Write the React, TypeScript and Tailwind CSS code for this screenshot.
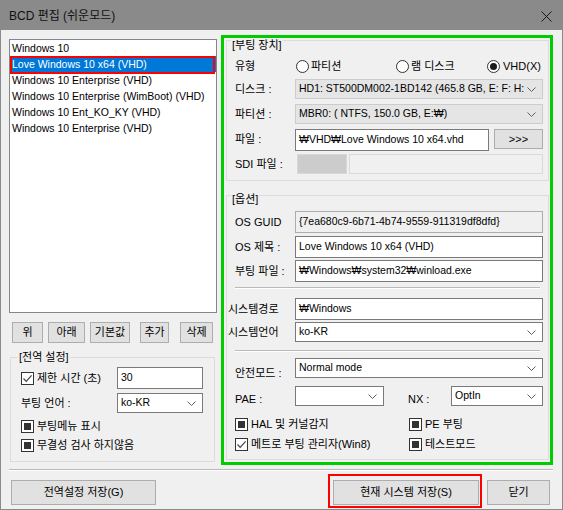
import type { ReactNode } from "react";
import { clsx as cn } from "clsx";

const ENTRIES = [
  "Windows 10",
  "Love Windows 10 x64 (VHD)",
  "Windows 10 Enterprise (VHD)",
  "Windows 10 Enterprise (WimBoot) (VHD)",
  "Windows 10 Ent_KO_KY (VHD)",
  "Windows 10 Enterprise (VHD)",
];

function Chevron() {
  return (
    <svg width="9" height="5" viewBox="0 0 9 5" className="shrink-0">
      <path d="M0.5 0.5 L4.5 4.5 L8.5 0.5" fill="none" stroke="#606060" strokeWidth="1" />
    </svg>
  );
}

function Combo({ value, disabled, className }: { value?: string; disabled?: boolean; className?: string }) {
  return (
    <div
      className={cn(
        "flex items-center justify-between h-[20px] border pl-[3px] pr-[6px] gap-[3px]",
        disabled ? "bg-[#e5e5e5] border-[#cccccc]" : "bg-white border-[#7a7a7a]",
        className
      )}
    >
      <span className="overflow-hidden whitespace-nowrap text-[10.5px]">{value}</span>
      <Chevron />
    </div>
  );
}

function TextBox({ value, readOnly, className }: { value?: string; readOnly?: boolean; className?: string }) {
  return (
    <div
      className={cn(
        "flex items-center h-[22px] border pl-[3px] whitespace-nowrap overflow-hidden text-[10.5px]",
        readOnly ? "bg-[#f0f0f0] border-[#adadad]" : "bg-white border-[#7a7a7a]",
        className
      )}
    >
      {value}
    </div>
  );
}

function Btn({ children, className }: { children: ReactNode; className?: string }) {
  return (
    <div
      className={cn(
        "flex items-center justify-center bg-[#e1e1e1] border border-[#adadad] whitespace-nowrap",
        className
      )}
    >
      {children}
    </div>
  );
}

function Check({ state, label, className }: { state: "checked" | "mixed"; label: string; className?: string }) {
  return (
    <div className={cn("flex items-center gap-[3px] h-[14px] whitespace-nowrap", className)}>
      <span className="w-[13px] h-[13px] border border-[#333333] bg-white flex items-center justify-center shrink-0">
        {state === "mixed" ? (
          <span className="w-[7px] h-[7px] bg-[#333333]" />
        ) : (
          <svg width="11" height="11" viewBox="0 0 11 11">
            <path d="M1.5 5.5 L4.2 8.3 L9.6 2.4" fill="none" stroke="#444444" strokeWidth="1.2" />
          </svg>
        )}
      </span>
      <span>{label}</span>
    </div>
  );
}

function Radio({ checked, label, className }: { checked?: boolean; label: string; className?: string }) {
  return (
    <div className={cn("flex items-center gap-[2px] whitespace-nowrap", className)}>
      <span className="w-[13px] h-[13px] rounded-full border border-[#333333] bg-white flex items-center justify-center shrink-0">
        {checked && <span className="w-[7px] h-[7px] rounded-full bg-[#1a1a1a]" />}
      </span>
      <span>{label}</span>
    </div>
  );
}

function Row({
  label,
  labelClass,
  className,
  children,
}: {
  label: string;
  labelClass?: string;
  className?: string;
  children: ReactNode;
}) {
  return (
    <div className={cn("flex items-center", className)}>
      <div className={cn("w-[60px] shrink-0 whitespace-nowrap", labelClass)}>{label}</div>
      <div className="w-[248px]">{children}</div>
    </div>
  );
}

function Separator({ className }: { className?: string }) {
  return (
    <div className={className}>
      <div className="h-[1px] bg-[#b9b9b9]" />
      <div className="h-[1px] bg-white" />
    </div>
  );
}

export default function App() {
  return (
    <div className="w-[563px] h-[510px] overflow-hidden bg-[#f0f0f0] border-x border-b border-[#8a8a8a] flex flex-col text-[11px] text-black font-['Liberation_Sans','Noto_Sans_CJK_KR',sans-serif]">
      {/* title bar */}
      <div className="h-[30px] shrink-0 bg-[#8a8a8a] flex items-center justify-between pl-[8px] pr-[10px] pt-[2px]">
        <span className="text-[12px] text-[#111111]">BCD 편집 (쉬운모드)</span>
        <svg width="11" height="11" viewBox="0 0 11 11">
          <path d="M0.5 0.5 L10.5 10.5 M10.5 0.5 L0.5 10.5" stroke="#1a1a1a" strokeWidth="1" />
        </svg>
      </div>

      <div className="flex items-start pl-[8px] pt-[5px]">
        {/* left column */}
        <div className="w-[208px] mt-[4px] flex flex-col">
          <div className="h-[274px] border border-[#828790] bg-white text-[10.5px]">
            {ENTRIES.map((entry, i) =>
              i === 1 ? (
                <div key={i} className="relative h-[16px] leading-[16px] pl-[2px] bg-[#0078d7] text-white whitespace-nowrap">
                  {entry}
                  <div className="absolute left-0 right-[1px] top-0 h-[18px] border-2 border-[#ff0000]" />
                </div>
              ) : (
                <div key={i} className="h-[16px] leading-[16px] pl-[2px] whitespace-nowrap">
                  {entry}
                </div>
              )
            )}
          </div>

          <div className="flex mt-[9px] h-[21px]">
            <Btn className="ml-[3px] w-[31px]">위</Btn>
            <Btn className="ml-[5px] w-[37px]">아래</Btn>
            <Btn className="ml-[5px] w-[40px]">기본값</Btn>
            <Btn className="ml-[10px] w-[29px]">추가</Btn>
            <Btn className="ml-[11px] w-[33px]">삭제</Btn>
          </div>

          <div className="ml-[1px] w-[205px] mt-[14px] border border-[#dcdcdc] pl-[10px] pb-[9px] flex flex-col">
            <div className="w-fit -mt-[8px] -ml-[3px] h-[14px] leading-[14px] px-[1px] bg-[#f0f0f0]">[전역 설정]</div>
            <div className="flex items-center mt-[3px]">
              <Check state="checked" label="제한 시간 (초)" className="w-[96px]" />
              <TextBox value="30" className="w-[86px]" />
            </div>
            <div className="flex items-center mt-[4px]">
              <div className="w-[96px]">부팅 언어 :</div>
              <Combo value="ko-KR" className="w-[86px]" />
            </div>
            <Check state="mixed" label="부팅메뉴 표시" className="mt-[6px]" />
            <Check state="mixed" label="무결성 검사 하지않음" className="mt-[5px]" />
          </div>
        </div>

        {/* right green frame */}
        <div className="ml-[4px] w-[332px] border-[3px] border-[#00cc00] flex flex-col">
          {/* boot device group */}
          <div className="mt-[2px] ml-[2px] mr-[1px] border border-[#dcdcdc] pl-[8px] pb-[6px] flex flex-col">
            <div className="w-fit -mt-[3px] -ml-[4px] h-[14px] leading-[14px] px-[1px] bg-[#f0f0f0]">[부팅 장치]</div>
            <div className="flex items-center mt-[6px] h-[17px]">
              <div className="w-[60px]">유형</div>
              <Radio label="파티션" className="ml-[1px] w-[100px]" />
              <Radio label="램 디스크" className="w-[91px]" />
              <Radio checked label="VHD(X)" className="gap-[3px]" />
            </div>
            <Row label="디스크 :" className="mt-[4px]">
              <Combo disabled value="HD1: ST500DM002-1BD142 (465.8 GB, E: F: H:" />
            </Row>
            <Row label="파티션 :" className="mt-[5px]">
              <Combo disabled value="MBR0: ( NTFS, 150.0 GB, E:₩)" />
            </Row>
            <Row label="파일 :" className="mt-[5px]">
              <div className="flex h-[20px]">
                <TextBox value="₩VHD₩Love Windows 10 x64.vhd" className="w-[194px] h-[20px]" />
                <Btn className="ml-[5px] w-[49px] h-[20px]">&gt;&gt;&gt;</Btn>
              </div>
            </Row>
            <Row label="SDI 파일 :" className="mt-[5px]">
              <div className="flex h-[20px]">
                <div className="ml-[2px] w-[50px] bg-[#cccccc] border border-[#d8d8d8]" />
                <div className="ml-[2px] flex-1 bg-[#f0f0f0] border border-[#d9d9d9]" />
              </div>
            </Row>
          </div>

          {/* options group */}
          <div className="mt-[14px] ml-[2px] mr-[1px] mb-[2px] border border-[#dcdcdc] pl-[8px] pb-[8px] flex flex-col">
            <div className="w-fit -mt-[4px] -ml-[4px] h-[14px] leading-[14px] px-[1px] bg-[#f0f0f0]">[옵션]</div>
            <Row label="OS GUID" className="mt-[5px]">
              <TextBox readOnly value="{7ea680c9-6b71-4b74-9559-911319df8dfd}" />
            </Row>
            <Row label="OS 제목 :" className="mt-[3px]">
              <TextBox value="Love Windows 10 x64 (VHD)" />
            </Row>
            <Row label="부팅 파일 :" className="mt-[2px]">
              <TextBox value="₩Windows₩system32₩winload.exe" />
            </Row>
            <Separator className="mt-[5px] mr-[8px]" />
            <Row label="시스템경로" labelClass="-ml-[7px] w-[67px]" className="mt-[9px]">
              <TextBox value="₩Windows" />
            </Row>
            <Row label="시스템언어" labelClass="-ml-[7px] w-[67px]" className="mt-[2px]">
              <Combo value="ko-KR" />
            </Row>
            <Separator className="mt-[8px] mr-[8px]" />
            <div className="flex items-start mt-[6px] h-[20px]">
              <div className="w-[60px] mt-[8px] leading-[14px]">안전모드 :</div>
              <Combo value="Normal mode" className="w-[248px]" />
            </div>
            <div className="flex items-start mt-[8px] h-[20px]">
              <div className="w-[60px] mt-[6px] leading-[14px]">PAE :</div>
              <Combo className="w-[89px]" />
              <div className="ml-[24px] w-[43px] mt-[6px] leading-[14px]">NX :</div>
              <Combo value="OptIn" className="w-[92px]" />
            </div>
            <div className="flex mt-[11px]">
              <Check state="mixed" label="HAL 및 커널감지" className="w-[174px]" />
              <Check state="mixed" label="PE 부팅" />
            </div>
            <div className="flex mt-[6px]">
              <Check state="checked" label="메트로 부팅 관리자(Win8)" className="w-[174px]" />
              <Check state="mixed" label="테스트모드" />
            </div>
          </div>
        </div>
      </div>

      {/* bottom separator */}
      <Separator className="mt-[4px] ml-[8px] mr-[9px]" />

      <div className="flex items-start mt-[3px]">
        <Btn className="ml-[10px] mt-[6px] w-[145px] h-[25px]">전역설정 저장(G)</Btn>
        <div className="ml-[172px] w-[154px] border-2 border-[#ff0000] pl-[3px] pt-[4px] pb-[1px]">
          <Btn className="w-[146px] h-[25px]">현재 시스템 저장(S)</Btn>
        </div>
        <Btn className="ml-[5px] mt-[6px] w-[63px] h-[25px]">닫기</Btn>
      </div>
    </div>
  );
}
